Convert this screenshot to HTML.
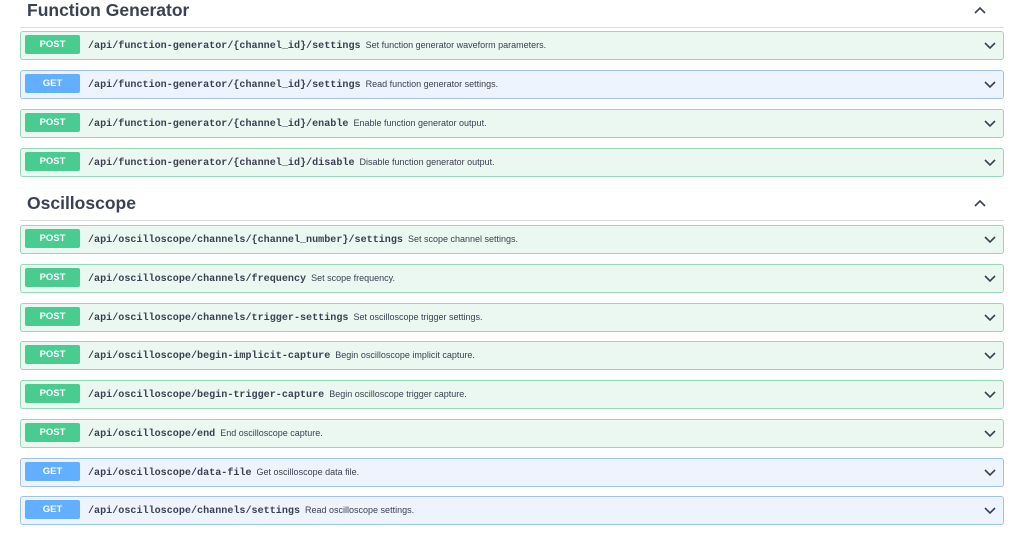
<!DOCTYPE html>
<html><head><meta charset="utf-8"><style>
body{margin:0;width:1024px;height:535px;background:#fff;font-family:"Liberation Sans",sans-serif;position:relative;overflow:hidden}
h2{position:absolute;left:27px;margin:0;font-size:17.5px;font-weight:bold;color:#3b4151}
.line{position:absolute;left:20px;width:984px;height:1px;background:#d9dbde}
.up{position:absolute;left:973px;width:14px;height:10px}
.row{position:absolute;left:20px;width:982px;height:27px;border:1px solid;border-radius:3px}
.post{background:#ebf7f1;border-color:#93dbb5}
.get{background:#eef4fd;border-color:#9fc2f5}
.b{position:absolute;left:4px;top:3px;width:55px;height:19px;border-radius:2px;color:#fff;font-weight:bold;font-size:9.5px;line-height:20px;text-align:center}
.post .b{background:#49cc90}.get .b{background:#61affe}
.p{position:absolute;left:67px;top:0;line-height:27px;font-family:"Liberation Mono",monospace;font-weight:bold;font-size:10.1px;color:#3b4151;white-space:nowrap}
.p span{font-family:"Liberation Sans",sans-serif;font-weight:normal;font-size:9px;margin-left:5px}
.c{position:absolute;right:6px;top:9px;width:14px;height:9px}
</style></head><body>
<h2 style="top:0">Function Generator</h2>
<svg class="up" style="top:5px" viewBox="0 0 14 10"><path d="M2 8L7 3L12 8" fill="none" stroke="#3b4151" stroke-width="1.6"/></svg>
<div class="line" style="top:27px"></div>
<div class="row post" style="top:31px"><div class="b">POST</div><div class="p">/api/function-generator/{channel_id}/settings<span>Set function generator waveform parameters.</span></div><svg class="c" viewBox="0 0 14 9"><path d="M2 2L7 7L12 2" fill="none" stroke="#3b4151" stroke-width="1.6"/></svg></div>
<div class="row get" style="top:70px"><div class="b">GET</div><div class="p">/api/function-generator/{channel_id}/settings<span>Read function generator settings.</span></div><svg class="c" viewBox="0 0 14 9"><path d="M2 2L7 7L12 2" fill="none" stroke="#3b4151" stroke-width="1.6"/></svg></div>
<div class="row post" style="top:109px"><div class="b">POST</div><div class="p">/api/function-generator/{channel_id}/enable<span>Enable function generator output.</span></div><svg class="c" viewBox="0 0 14 9"><path d="M2 2L7 7L12 2" fill="none" stroke="#3b4151" stroke-width="1.6"/></svg></div>
<div class="row post" style="top:148px"><div class="b">POST</div><div class="p">/api/function-generator/{channel_id}/disable<span>Disable function generator output.</span></div><svg class="c" viewBox="0 0 14 9"><path d="M2 2L7 7L12 2" fill="none" stroke="#3b4151" stroke-width="1.6"/></svg></div>
<h2 style="top:193px">Oscilloscope</h2>
<svg class="up" style="top:198px" viewBox="0 0 14 10"><path d="M2 8L7 3L12 8" fill="none" stroke="#3b4151" stroke-width="1.6"/></svg>
<div class="line" style="top:220px"></div>
<div class="row post" style="top:225px"><div class="b">POST</div><div class="p">/api/oscilloscope/channels/{channel_number}/settings<span>Set scope channel settings.</span></div><svg class="c" viewBox="0 0 14 9"><path d="M2 2L7 7L12 2" fill="none" stroke="#3b4151" stroke-width="1.6"/></svg></div>
<div class="row post" style="top:264px"><div class="b">POST</div><div class="p">/api/oscilloscope/channels/frequency<span>Set scope frequency.</span></div><svg class="c" viewBox="0 0 14 9"><path d="M2 2L7 7L12 2" fill="none" stroke="#3b4151" stroke-width="1.6"/></svg></div>
<div class="row post" style="top:303px"><div class="b">POST</div><div class="p">/api/oscilloscope/channels/trigger-settings<span>Set oscilloscope trigger settings.</span></div><svg class="c" viewBox="0 0 14 9"><path d="M2 2L7 7L12 2" fill="none" stroke="#3b4151" stroke-width="1.6"/></svg></div>
<div class="row post" style="top:341px"><div class="b">POST</div><div class="p">/api/oscilloscope/begin-implicit-capture<span>Begin oscilloscope implicit capture.</span></div><svg class="c" viewBox="0 0 14 9"><path d="M2 2L7 7L12 2" fill="none" stroke="#3b4151" stroke-width="1.6"/></svg></div>
<div class="row post" style="top:380px"><div class="b">POST</div><div class="p">/api/oscilloscope/begin-trigger-capture<span>Begin oscilloscope trigger capture.</span></div><svg class="c" viewBox="0 0 14 9"><path d="M2 2L7 7L12 2" fill="none" stroke="#3b4151" stroke-width="1.6"/></svg></div>
<div class="row post" style="top:419px"><div class="b">POST</div><div class="p">/api/oscilloscope/end<span>End oscilloscope capture.</span></div><svg class="c" viewBox="0 0 14 9"><path d="M2 2L7 7L12 2" fill="none" stroke="#3b4151" stroke-width="1.6"/></svg></div>
<div class="row get" style="top:458px"><div class="b">GET</div><div class="p">/api/oscilloscope/data-file<span>Get oscilloscope data file.</span></div><svg class="c" viewBox="0 0 14 9"><path d="M2 2L7 7L12 2" fill="none" stroke="#3b4151" stroke-width="1.6"/></svg></div>
<div class="row get" style="top:496px"><div class="b">GET</div><div class="p">/api/oscilloscope/channels/settings<span>Read oscilloscope settings.</span></div><svg class="c" viewBox="0 0 14 9"><path d="M2 2L7 7L12 2" fill="none" stroke="#3b4151" stroke-width="1.6"/></svg></div>
</body></html>
